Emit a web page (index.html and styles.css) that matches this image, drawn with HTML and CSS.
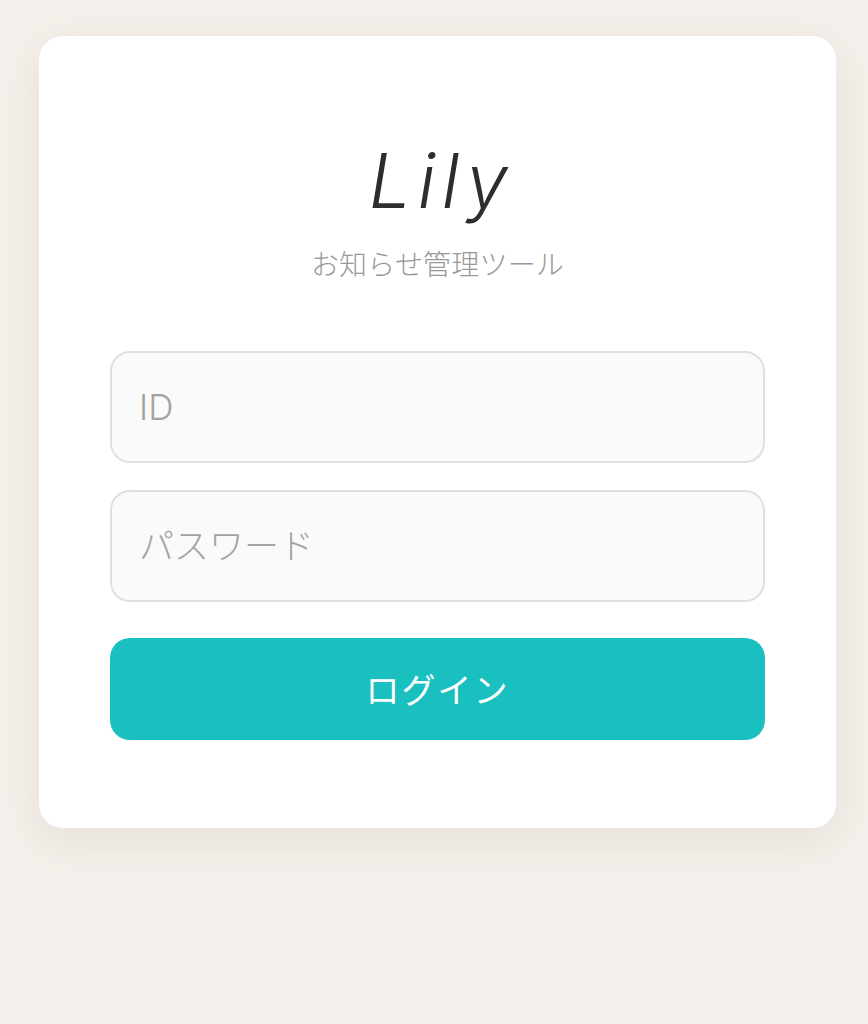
FILE: index.html
```html
<!DOCTYPE html>
<html lang="ja">
<head>
    <meta charset="UTF-8">
    <meta name="viewport" content="width=device-width, initial-scale=1.0">
    <title>Lily</title>
    <link rel="stylesheet" href="styles.css">
</head>
<body>
    <div class="card">
        <h1 class="logo">Lily</h1>
        <p class="subtitle">お知らせ管理ツール</p>
        <input class="field" type="text" placeholder="ID">
        <input class="field" type="password" placeholder="パスワード">
        <button class="login-btn">ログイン</button>
    </div>
</body>
</html>
```

FILE: styles.css
```css
body {
    margin: 0;
    padding: 36px 32px 0 39px;
    height: 1024px;
    box-sizing: border-box;
    overflow: hidden;
    background-color: #f5f0eb;
    font-family: "Inter", "Noto Sans CJK JP", sans-serif;
}
.card {
    box-sizing: border-box;
    height: 792px;
    padding: 108px 71px 0;
    background: white;
    border-radius: 24px;
    box-shadow: 0 12px 48px rgba(120,100,80,0.12);
}
.logo {
    margin: 0;
    padding: 1px 0 0 8px;
    font-family: "Inter", "Noto Sans CJK JP", sans-serif;
    font-size: 75px;
    line-height: 72px;
    font-weight: 300;
    font-style: italic;
    letter-spacing: 6.5px;
    text-align: center;
    color: #2d2d2d;
}
.subtitle {
    margin: 28px 0 66px;
    font-size: 28px;
    line-height: 40px;
    font-weight: 300;
    letter-spacing: 0.2px;
    text-align: center;
    color: #999;
}
.field {
    display: block;
    box-sizing: border-box;
    width: 100%;
    height: 112px;
    margin-bottom: 27px;
    padding: 0 27px;
    border: 2px solid #e0e0e0;
    border-radius: 20px;
    background-color: #fafafa;
    font-family: inherit;
    font-size: 35px;
    font-weight: 300;
}
.field::placeholder {
    color: #a3a3a3;
}
.login-btn {
    display: block;
    width: 100%;
    height: 102px;
    margin-top: 36px;
    padding-bottom: 3px;
    border: none;
    border-radius: 20px;
    background-color: #1abfbf;
    color: white;
    font-family: inherit;
    font-size: 34px;
    font-weight: 400;
    letter-spacing: 2px;
}
```
